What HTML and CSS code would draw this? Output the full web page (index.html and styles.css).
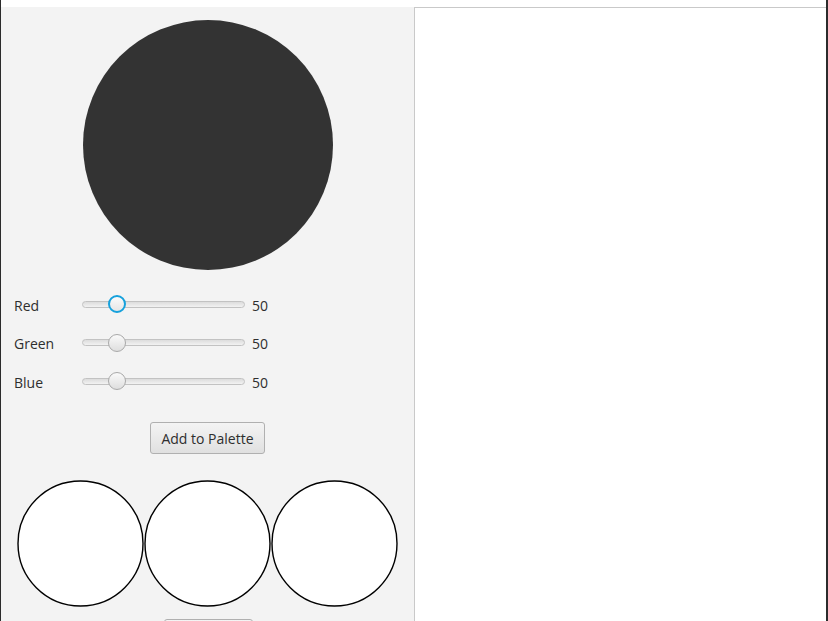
FILE: index.html
```html
<!DOCTYPE html>
<html>
<head>
<meta charset="utf-8">
<link rel="stylesheet" href="styles.css">
</head>
<body>
<div class="window">
  <div class="titlegap"></div>
  <div class="main">
    <div class="left">
      <div class="preview"></div>
      <div class="sliders">
        <div class="row">
          <span class="label">Red</span>
          <div class="track"><div class="thumb focused"></div></div>
          <span class="value">50</span>
        </div>
        <div class="row">
          <span class="label">Green</span>
          <div class="track"><div class="thumb"></div></div>
          <span class="value">50</span>
        </div>
        <div class="row">
          <span class="label">Blue</span>
          <div class="track"><div class="thumb"></div></div>
          <span class="value">50</span>
        </div>
      </div>
      <div class="btnrow"><button class="btn">Add to Palette</button></div>
      <div class="palette">
        <svg class="swatch" width="127" height="127" viewBox="0 0 127 127"><circle cx="63.5" cy="63.5" r="62.5" fill="#fff" stroke="#000" stroke-width="1.4"/></svg>
        <svg class="swatch" width="127" height="127" viewBox="0 0 127 127"><circle cx="63.5" cy="63.5" r="62.5" fill="#fff" stroke="#000" stroke-width="1.4"/></svg>
        <svg class="swatch" width="127" height="127" viewBox="0 0 127 127"><circle cx="63.5" cy="63.5" r="62.5" fill="#fff" stroke="#000" stroke-width="1.4"/></svg>
      </div>
      <div class="btnrow lower"><button class="btn small" aria-label="Clear"></button></div>
    </div>
    <div class="right"></div>
  </div>
</div>
</body>
</html>
```
FILE: styles.css
```css
html, body {
  margin: 0;
  padding: 0;
  background: #fff;
}
.window {
  width: 828px;
  height: 621px;
  box-sizing: border-box;
  border-left: 1px solid #2b2b2b;
  border-right: 2px solid #2b2b2b;
  display: flex;
  flex-direction: column;
  overflow: hidden;
  font-family: "Open Sans", "Noto Sans", sans-serif;
  font-size: 14px;
  color: #2e2e2e;
}
.titlegap {
  height: 7px;
  background: #fff;
  flex: none;
}
.main {
  flex: 1;
  display: flex;
  min-height: 0;
}
.left {
  width: 413px;
  flex: none;
  background: #f3f3f3;
  overflow: hidden;
  display: flex;
  flex-direction: column;
}
.right {
  flex: 1;
  background: #fff;
  border-top: 1px solid #c9c9c9;
  border-left: 1px solid #c9c9c9;
}
.preview {
  width: 250px;
  height: 250px;
  border-radius: 50%;
  background: #333333;
  margin: 13px 0 0 82px;
  flex: none;
}
.sliders {
  margin-top: 24px;
  display: flex;
  flex-direction: column;
  gap: 18.5px;
}
.row {
  height: 20px;
  display: flex;
  align-items: center;
  padding-left: 13px;
}
.label {
  width: 68px;
  flex: none;
  line-height: 20px;
  padding-top: 3px;
}
.track {
  position: relative;
  width: 163px;
  height: 7px;
  box-sizing: border-box;
  border: 1px solid #c2c2c2;
  border-radius: 4px;
  background: linear-gradient(#dcdcdc, #f2f2f2);
  flex: none;
}
.thumb {
  position: absolute;
  left: 25px;
  top: 50%;
  width: 18px;
  height: 18px;
  margin-top: -9px;
  box-sizing: border-box;
  border-radius: 50%;
  border: 1px solid #a9a9a9;
  background: linear-gradient(#fafafa, #dedede);
}
.thumb.focused {
  border: 2px solid #16a1dc;
  background: linear-gradient(#fbfbfb, #e6e6e6);
}
.value {
  margin-left: 7px;
  line-height: 20px;
  padding-top: 3px;
}
.btnrow {
  display: flex;
  justify-content: center;
  margin-top: 31px;
}
.btn {
  width: 115px;
  height: 32px;
  box-sizing: border-box;
  border: 1px solid #b0b0b0;
  border-radius: 3px;
  background: linear-gradient(#f4f4f4, #e0e0e0);
  font-family: "Open Sans", "Noto Sans", sans-serif;
  font-size: 14px;
  color: #2e2e2e;
  padding: 0;
}
.palette {
  display: flex;
  justify-content: center;
  margin-top: 26px;
}
.swatch {
  display: block;
  flex: none;
}
.btnrow.lower {
  margin-top: 12px;
  margin-left: 1px;
}
.btn.small {
  width: 89px;
}
```
